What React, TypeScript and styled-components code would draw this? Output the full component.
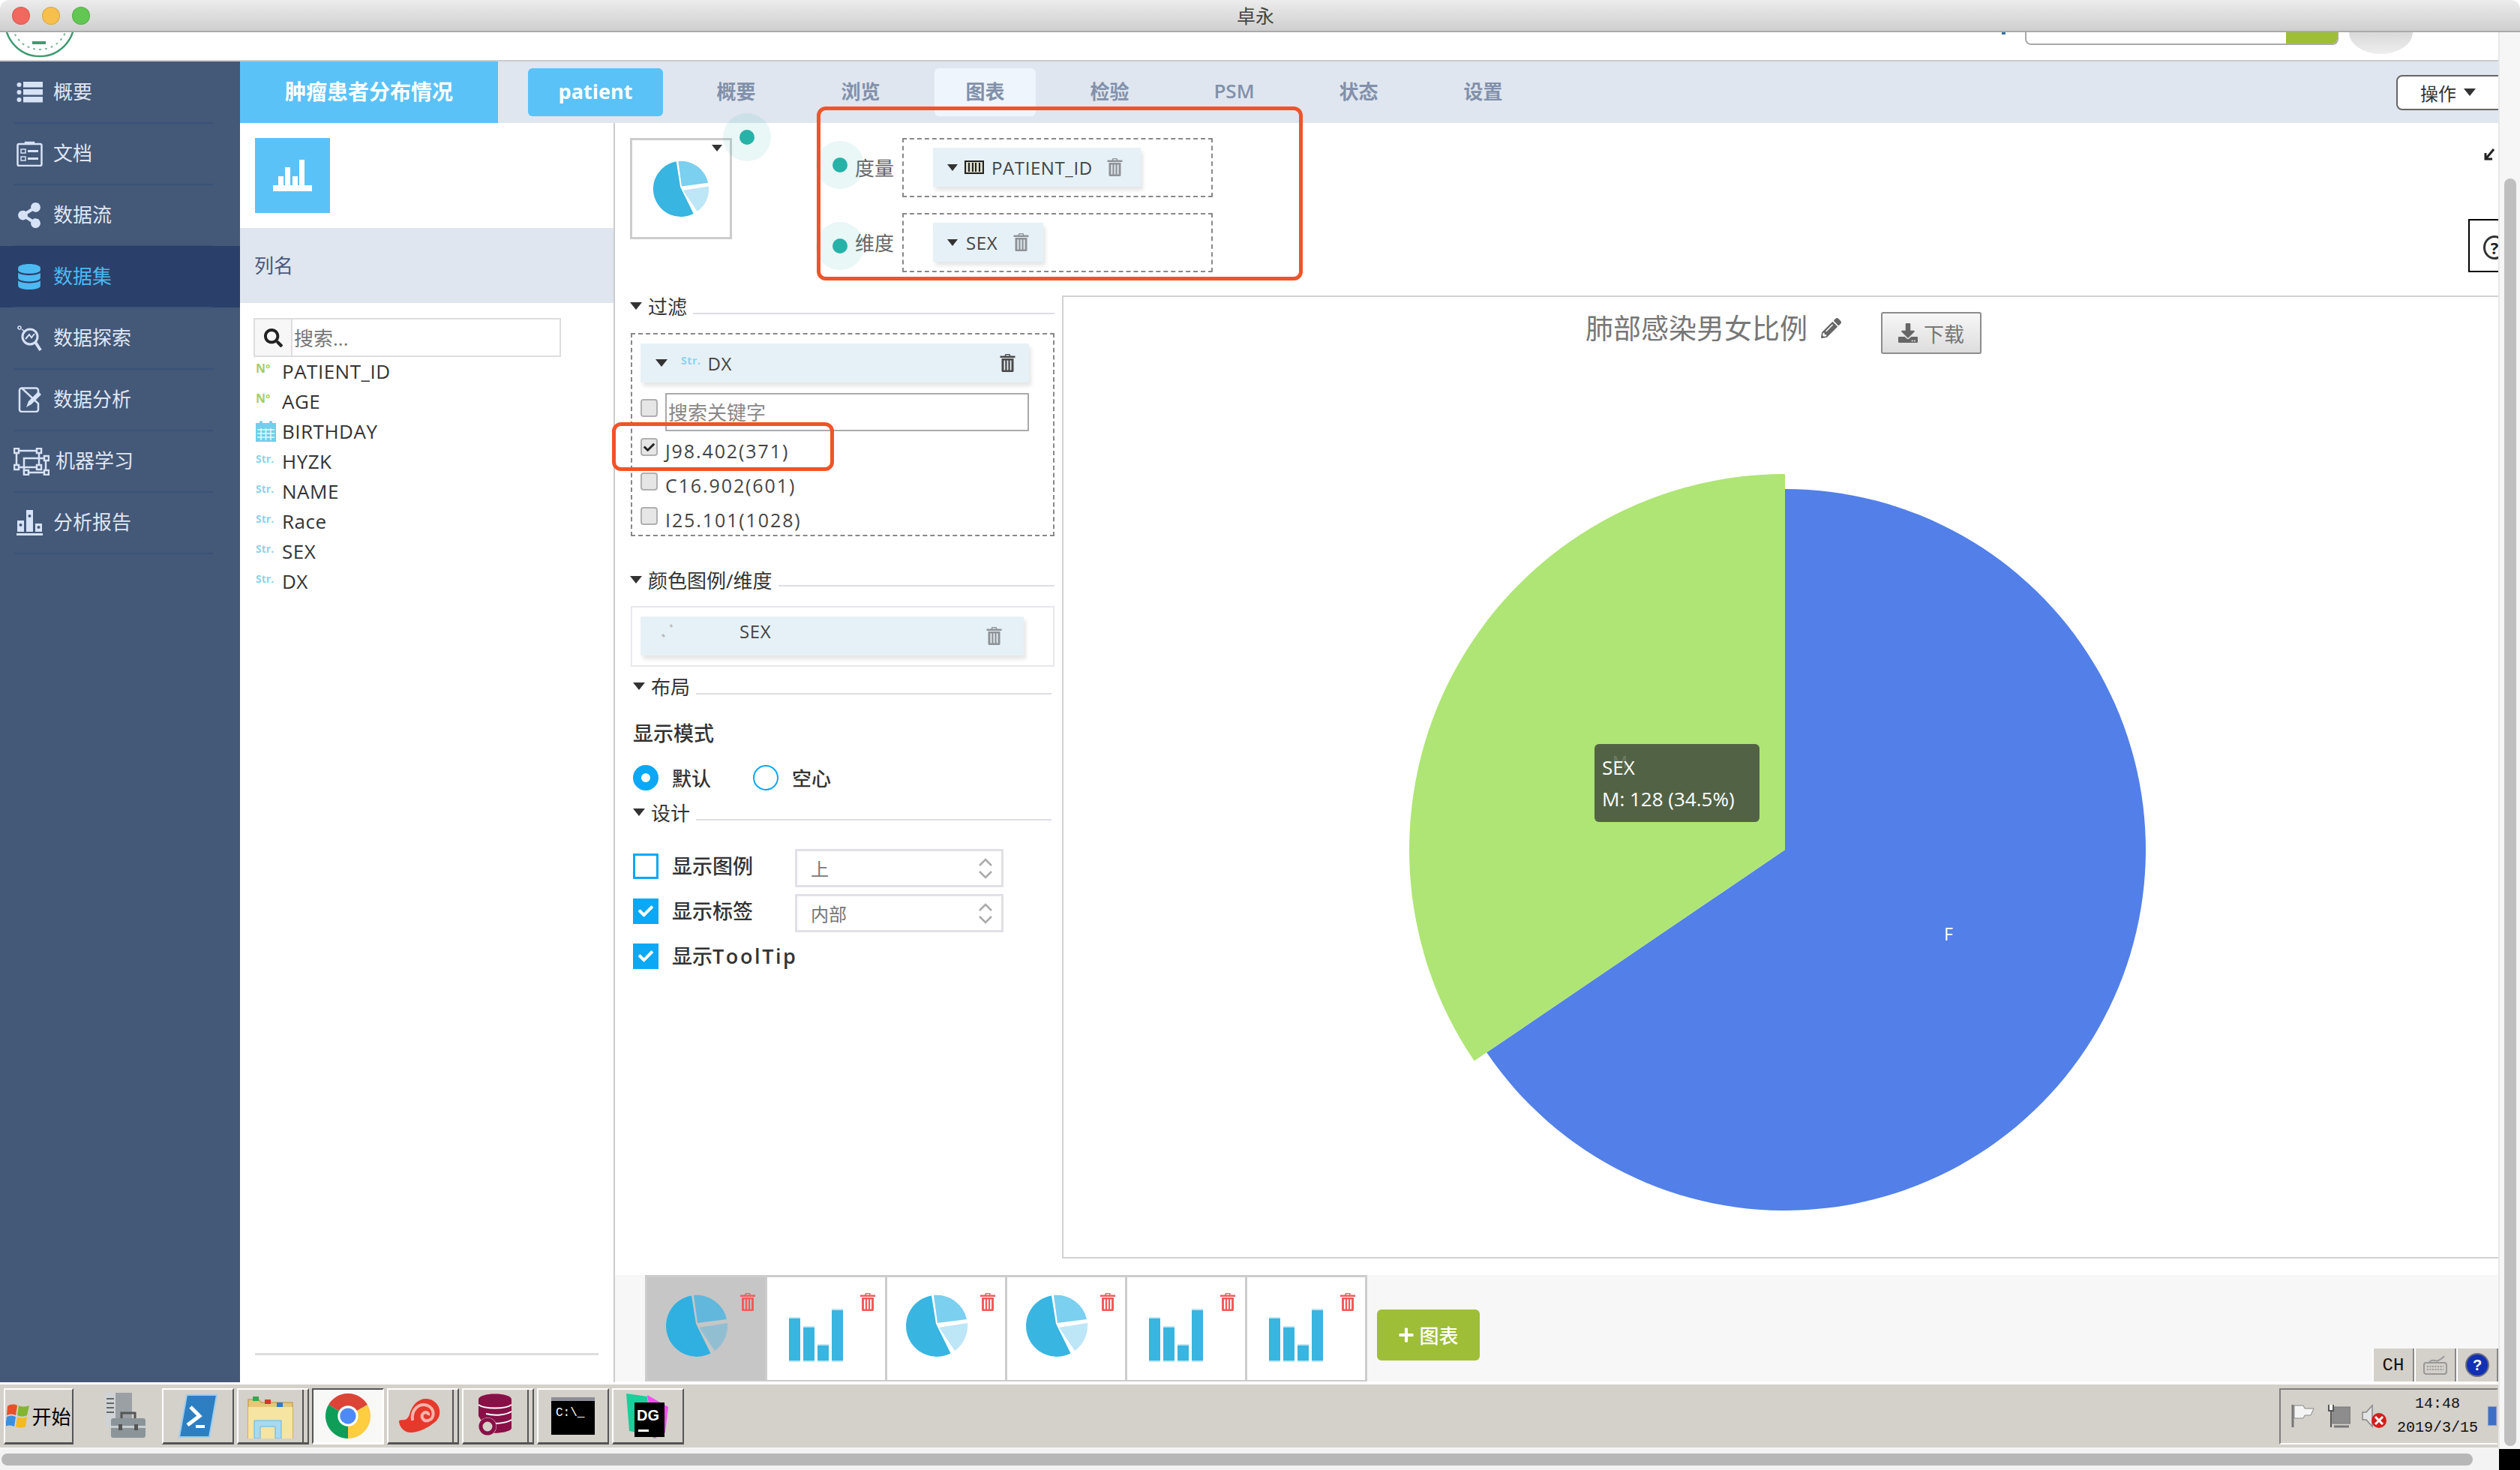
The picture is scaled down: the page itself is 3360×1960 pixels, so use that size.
import React from "react";
import styled, { createGlobalStyle } from "styled-components";
import { FaShareAlt, FaDatabase, FaSearch, FaPencilAlt, FaDownload, FaCheck, FaPlus } from "react-icons/fa";

const Global = createGlobalStyle`
  html, body { margin: 0; padding: 0; background: #fff; }
  body { font-family: "Open Sans", "Noto Sans CJK SC", sans-serif; color: #333; }
  * { box-sizing: border-box; }
`;

const Root = styled.div`
  position: relative; width: 3360px; height: 1960px; overflow: hidden;
  display: flex; flex-direction: column; background: #fff;
`;
const TitleBar = styled.div`
  height: 43px; flex: none; display: flex; align-items: center; position: relative;
  background: linear-gradient(#ececec, #cfcfcf); border-bottom: 2px solid #aaa;
  border-radius: 12px 12px 0 0; padding-left: 16px; gap: 16px;
`;
const Light = styled.span<{ $c: string }>`
  width: 24px; height: 24px; border-radius: 50%; background: ${p => p.$c};
  border: 1px solid rgba(0,0,0,.12); flex: none;
`;
const WindowTitle = styled.div`
  margin-left: 1508px; width: 60px; text-align: center; font-size: 25px; line-height: 30px; color: #444;
`;
const Upper = styled.div`height: 1889px; flex: none; display: flex;`;
const Page = styled.div`width: 3331px; flex: none; display: flex; flex-direction: column; background: #f5f5f5;`;
const VScroll = styled.div`
  width: 29px; flex: none; background: #f6f6f6; border-left: 2px solid #e8e8e8;
  padding: 195px 5px 4px 6px;
`;
const VThumb = styled.div`height: 100%; width: 16px; border-radius: 8px; background: #bfbfbf;`;
const HBar = styled.div`height: 28px; flex: none; display: flex;`;
const HTrack = styled.div`width: 3332px; flex: none; background: #f3f3f3; padding: 6px 35px 6px 2px;`;
const HThumb = styled.div`height: 16px; border-radius: 8px; background: #b7b7b7;`;
const Corner = styled.div`flex: 1; background: #000;`;

const Header = styled.header`
  height: 39px; flex: none; display: flex; align-items: flex-start; background: #fff;
  border-bottom: 2px solid #ccc; overflow: hidden;
`;
const Logo = styled.svg`width: 96px; height: 35px; margin-left: 5px; flex: none;`;
const TinyMark = styled.span`width: 5px; height: 3px; margin-left: 2568px; background: #3a6ea5; flex: none;`;
const TopSearch = styled.div`
  width: 418px; height: 17px; margin-left: 26px; display: flex; justify-content: flex-end; flex: none;
  border: 2px solid #aaa; border-top: none; border-radius: 0 0 8px 8px; overflow: hidden; background: #fff;
`;
const TopSearchBtn = styled.div`width: 68px; height: 100%; background: #9ebe38;`;
const Avatar = styled.div`
  width: 85px; height: 29px; margin-left: 14px; flex: none;
  border-radius: 0 0 43px 43px / 0 0 29px 29px; background: linear-gradient(#d9d9d9, #eeeeee);
`;

const Main = styled.div`height: 1761px; flex: none; display: flex; background: #fff;`;
const Sidebar = styled.nav`width: 320px; flex: none; background: #445878; display: flex; flex-direction: column;`;
const SideItem = styled.div<{ $active?: boolean }>`
  height: 82px; flex: none; position: relative; display: flex; align-items: center;
  background: ${p => (p.$active ? "#2a3f69" : "transparent")};
  color: ${p => (p.$active ? "#4cb9f1" : "#dfe6f2")};
  font-size: 26px;
  &::after {
    content: ""; position: absolute; left: 18px; width: 266px; bottom: -1px; height: 2px;
    background: #3a5278;
  }
`;
const SideIcon = styled.span<{ $wide?: boolean }>`
  width: ${p => (p.$wide ? 74 : 71)}px; flex: none; display: flex; justify-content: flex-start;
  padding-left: ${p => (p.$wide ? 18 : 22)}px;
`;
const SideLabel = styled.span`line-height: 36px; margin-top: -2px;`;

const Content = styled.div`flex: 1; min-width: 0; display: flex; flex-direction: column; overflow: hidden;`;
const TopBand = styled.div`height: 82px; flex: none; display: flex; align-items: center; background: #dfe6ef;`;
const ProjectTitle = styled.div`
  width: 344px; height: 82px; flex: none; background: #5bc2f7; color: #fff; padding-bottom: 4px;
  font-size: 28px; font-weight: 700; display: flex; align-items: center; justify-content: center;
`;
const DatasetTab = styled.div`
  width: 180px; height: 64px; margin-left: 40px; margin-right: 30px; flex: none; border-radius: 6px;
  background: #5bc2f7; color: #fff; font-size: 27px; font-weight: 700; padding-bottom: 4px;
  display: flex; align-items: center; justify-content: center;
`;
const TabRow = styled.div`display: flex; gap: 31px; flex: none;`;
const Tab = styled.div<{ $active?: boolean }>`
  width: 135px; height: 64px; border-radius: 6px; font-size: 26px; color: #8290aa; font-weight: 600;
  display: flex; align-items: center; justify-content: center; padding-bottom: 4px;
  background: ${p => (p.$active ? "#eef5fc" : "transparent")};
`;
const ActionBtn = styled.div`
  margin-left: auto; margin-right: -14px; width: 150px; height: 47px; flex: none;
  background: #fff; border: 2px solid #666; border-radius: 8px; font-size: 24px; color: #333;
  display: flex; align-items: center; gap: 10px; padding-left: 30px;
`;
const Caret = styled.span<{ $w?: number; $c?: string }>`
  display: inline-block; flex: none; width: 0; height: 0;
  border-left: ${p => (p.$w ?? 16) / 2}px solid transparent;
  border-right: ${p => (p.$w ?? 16) / 2}px solid transparent;
  border-top: ${p => Math.round((p.$w ?? 16) * 0.6)}px solid ${p => p.$c ?? "#333"};
`;

const Row = styled.div`flex: 1; display: flex; min-height: 0;`;
const ColumnList = styled.div`width: 500px; flex: none; border-right: 2px solid #ccc; display: flex; flex-direction: column;`;
const TypeBtn = styled.div`
  width: 100px; height: 100px; margin: 20px 0 20px 20px; flex: none; background: #5bc2f7;
  display: flex; align-items: center; justify-content: center;
`;
const ColHead = styled.div`
  height: 100px; flex: none; background: #dfe6ef; color: #4a5a80; font-size: 26px;
  display: flex; align-items: center; padding: 0 0 3px 19px;
`;
const SearchBox = styled.div`
  width: 410px; height: 52px; margin: 20px 0 0 18px; flex: none; display: flex;
  border: 2px solid #ddd; font-size: 26px; color: #777; align-items: stretch;
`;
const SearchIcon = styled.span`
  width: 50px; flex: none; background: #f7f7f7; border-right: 2px solid #ddd; color: #222;
  display: flex; align-items: center; justify-content: center;
`;
const SearchHint = styled.span`padding-left: 2px; align-self: center;`;
const Fields = styled.div`margin-top: -1px; padding-left: 21px; display: flex; flex-direction: column;`;
const FieldRow = styled.div`height: 40px; display: flex; align-items: center; font-size: 26px; color: #333; letter-spacing: .5px;`;
const TypeSlot = styled.span`width: 35px; flex: none; display: flex; align-items: center;`;
const StrTag = styled.span`font-size: 14px; color: #8ed3ee; font-weight: 700; letter-spacing: 0; margin-top: -8px;`;
const NoTag = styled.span`font-size: 16px; color: #a3cf62; font-weight: 700; letter-spacing: 0; margin-top: -8px;`;
const SideRule = styled.div`height: 3px; margin: auto 20px 36px 20px; background: #ddd; flex: none;`;

const Workspace = styled.div`flex: 1; min-width: 0; display: flex; flex-direction: column; position: relative;`;
const Shelf = styled.div`height: 230px; flex: none; display: flex; padding: 20px 0 0 20px;`;
const Picker = styled.div`
  position: relative; width: 136px; height: 135px; flex: none; border: 3px solid #ccc;
  display: flex; align-items: center; justify-content: center;
`;
const PickerCaret = styled.span`position: absolute; top: 6px; right: 10px; display: flex;`;
const ShelfRows = styled.div`margin-left: 164px; display: flex; flex-direction: column; gap: 21px;`;
const ShelfRow = styled.div`display: flex; align-items: center; height: 79px;`;
const ShelfLabel = styled.span`width: 63px; font-size: 26px; color: #666; flex: none; margin-top: -2px;`;
const DropBox = styled.div`
  width: 414px; height: 79px; flex: none; border: 2px dashed #888; padding: 11px 0 0 39px;
`;
const Chip = styled.div<{ $w: number; $color?: string }>`
  width: ${p => p.$w}px; height: 52px; background: #e6f1f7; box-shadow: 3px 5px 5px rgba(0,0,0,.1);
  display: flex; align-items: center; font-size: 24px; letter-spacing: .6px; color: ${p => p.$color ?? "#444"};
  position: relative;
`;
const ChipCaret = styled.span<{ $mr?: number }>`margin-left: 19px; margin-right: ${p => p.$mr ?? 9}px; display: flex;`;
const IdIcon = styled.svg`width: 26px; height: 18px; margin-right: 10px; flex: none;`;
const ChipTrash = styled.span<{ $ml?: number; $end?: number }>`
  margin-left: ${p => (p.$end !== undefined ? "auto" : `${p.$ml ?? 20}px`)};
  margin-right: ${p => p.$end ?? 0}px; display: flex; flex: none;
`;

const Split = styled.div`height: 1306px; flex: none; display: flex;`;
const Controls = styled.div`width: 596px; flex: none; padding: 0 10px 0 21px; display: flex; flex-direction: column;`;
const SectionHead = styled.div<{ $mt?: number; $inset?: boolean }>`
  height: 28px; flex: none; display: flex; align-items: center; gap: 8px; font-size: 26px; color: #333;
  margin-top: ${p => p.$mt ?? 0}px; position: relative;
  margin-left: ${p => (p.$inset ? 3 : -1)}px; margin-right: ${p => (p.$inset ? 4 : 0)}px;
`;
const HeadLine = styled.span<{ $b?: number }>`
  flex: 1; height: 2px; background: #dedee6; align-self: flex-end; margin-bottom: ${p => p.$b ?? 3}px;
`;
const FilterBox = styled.div`
  height: 271px; margin-top: 22px; flex: none; border: 2px dashed #888; padding: 12px 32px 0 11px;
  display: flex; flex-direction: column;
`;
const DxCaret = styled.span`margin-left: 20px; margin-right: 18px; display: flex;`;
const DxTag = styled.span`font-size: 14px; color: #8ed3ee; font-weight: 700; margin-right: 9px; margin-top: -8px;`;
const SearchRow = styled.div`display: flex; margin-top: 14px; height: 51px; gap: 10px; align-items: flex-start;`;
const MiniCheck = styled.span`
  width: 23px; height: 24px; flex: none; border-radius: 4px; border: 2px solid #b0b0b0; background: #e6e6e6;
  display: flex; align-items: center; justify-content: center; color: #222;
`;
const MiniCheckWrap = styled.span`margin-top: 8px; display: flex;`;
const KeywordInput = styled.div`
  flex: 1; height: 51px; border: 2px solid #aaa; font-size: 26px; color: #888; padding: 6px 0 0 2px; line-height: 36px;
`;
const Options = styled.div`margin-top: 6px; display: flex; flex-direction: column; gap: 6px;`;
const OptionRow = styled.div`
  height: 40px; display: flex; gap: 10px; align-items: center; font-size: 25px; color: #444; letter-spacing: 1.9px;
  & > span { margin-bottom: 10px; }
`;
const LegendBox = styled.div`
  height: 81px; margin-top: 21px; flex: none; border: 2px solid #e8e8ee; padding: 12px 0 0 11px;
`;
const LegendGrip = styled.svg`width: 18px; height: 18px; margin-left: 26px; margin-top: -14px; flex: none;`;
const LegendName = styled.span`margin-left: 88px; margin-top: -14px; font-size: 24px; color: #444;`;
const FieldLabel = styled.div`margin-top: 29px; margin-left: 3px; height: 40px; flex: none; font-size: 27px; line-height: 40px; color: #333; font-weight: 500;`;
const RadioRow = styled.div`margin-top: 22px; margin-left: 3px; height: 34px; display: flex; align-items: center; flex: none; font-size: 26px; color: #333; font-weight: 500;`;
const Radio = styled.span<{ $on?: boolean }>`
  width: 34px; height: 34px; border-radius: 50%; flex: none;
  ${p => (p.$on ? "border: 11px solid #0aa8f5; background: #fff;" : "border: 2px solid #0aa8f5;")}
`;
const RadioText = styled.span`margin-left: 18px; width: 108px;`;
const DesignRows = styled.div`margin-top: 35px; margin-left: 3px; display: flex; flex-direction: column; gap: 9px;`;
const DesignRow = styled.div`height: 51px; display: flex; align-items: flex-start;`;
const Tick = styled.span<{ $on?: boolean }>`
  width: 34px; height: 34px; margin-top: 6px; flex: none; border: 3px solid #0aa8f5; color: #fff;
  background: ${p => (p.$on ? "#0aa8f5" : "#fff")}; display: flex; align-items: center; justify-content: center;
`;
const TickLabel = styled.span`margin-left: 18px; margin-top: 6px; line-height: 34px; font-size: 27px; width: 164px; color: #333; font-weight: 500; flex: none; white-space: nowrap;`;
const TickLatin = styled.span`letter-spacing: 2.6px; font-weight: 600;`;
const SelectBox = styled.div`
  width: 278px; height: 51px; flex: none; border: 3px solid #e0e0e6; display: flex; align-items: center;
  padding: 0 10px 0 18px; justify-content: space-between; font-size: 24px; color: #777;
`;
const Chev = styled.svg`width: 22px; height: 30px; flex: none;`;

const Chart = styled.div`
  flex: 1; min-width: 0; height: 1284px; border: 2px solid #d2d2d2; border-right: none; background: #fff;
  display: flex; flex-direction: column;
`;
const ChartHead = styled.div`display: flex; align-items: flex-start; padding: 20px 0 0 696px; height: 76px; flex: none;`;
const ChartTitle = styled.span`font-size: 37px; line-height: 44px; color: #777; flex: none;`;
const PencilSlot = styled.span`margin: 8px 0 0 18px; color: #666; display: flex; flex: none;`;
const DownloadBtn = styled.div`
  margin-left: 53px; width: 134px; height: 56px; flex: none; border: 2px solid #8c8c8c; border-radius: 3px;
  background: linear-gradient(#f7f7f7, #dddddd); display: flex; align-items: center; justify-content: center;
  gap: 8px; font-size: 27px; color: #777;
`;
const Canvas = styled.div`position: relative; width: 1000px; height: 1000px; margin: 153px 0 0 452px; flex: none;`;
const PieSvg = styled.svg`width: 1000px; height: 1000px; display: block;`;
const Tooltip = styled.div`
  position: absolute; left: 256px; top: 367px; width: 220px; height: 104px; border-radius: 6px;
  background: #526345; color: #fff; font-size: 26px; line-height: 42px; padding: 10px 0 0 10px;
`;
const GhostM = styled.span`position: absolute; left: 24px; top: 2px; font-size: 22px; color: rgba(255,255,255,.18);`;

const Strip = styled.div`
  height: 142px; flex: none; background: #f7f7f7; padding-left: 40px; display: flex; position: relative;
`;
const Thumb = styled.div<{ $sel?: boolean; $last?: boolean }>`
  width: ${p => (p.$last ? 163 : 160)}px; height: 142px; flex: none; position: relative;
  background: ${p => (p.$sel ? "#c6c6c6" : "#fff")};
  border: 3px solid #ccc; border-right-width: ${p => (p.$last ? 3 : 0)}px;
  border-bottom-width: 2px; padding-top: 23px;
`;
const ThumbTrash = styled.span`position: absolute; left: 123px; top: 21px; display: flex;`;
const ThumbPie = styled.svg`width: 84px; height: 84px; margin-left: 24px; display: block;`;
const ThumbBars = styled.svg`width: 72px; height: 72px; margin: 19px 0 0 29px; display: block;`;
const AddChart = styled.div`
  width: 137px; height: 68px; margin: 46px 0 0 13px; flex: none; border-radius: 6px; background: #9ebe38; color: #fff;
  display: flex; align-items: center; justify-content: center; gap: 6px; font-size: 26px; font-weight: 500;
`;
const LangBar = styled.div`position: absolute; right: 0; bottom: 0; height: 44px; display: flex; background: #d4d0ca;`;
const LangCell = styled.div`
  width: 56px; height: 44px; border-left: 2px solid #fff; border-right: 2px solid #888;
  display: flex; align-items: center; justify-content: center;
  font-family: "Liberation Mono", monospace; font-size: 24px; color: #111;
`;

const FrameGap = styled.div`height: 3px; flex: none; background: #fff;`;
const Taskbar = styled.div`
  height: 84px; flex: none; background: #d4d0ca; display: flex; align-items: center; padding-left: 5px; gap: 4px;
  overflow: hidden;
`;
const TaskBtn = styled.div<{ $w?: number; $stack?: boolean; $down?: boolean }>`
  width: ${p => p.$w ?? 96}px; height: 75px; flex: none; display: flex; align-items: center; justify-content: center;
  border: 2px solid; border-color: ${p => (p.$down ? "#555 #fff #fff #555" : "#fff #555 #555 #fff")};
  border-bottom-width: 3px;
  background: ${p => (p.$down ? "#f8f8f6" : "#d4d0ca")};
  ${p => (p.$stack ? "box-shadow: inset -5px 0 0 #d4d0ca, inset -7px 0 0 #555; padding-right: 8px;" : "")}
`;
const StartLabel = styled.span`font-size: 26px; color: #000; margin-left: 2px;`;
const PlainIcon = styled.div`width: 110px; height: 75px; flex: none; display: flex; align-items: center; justify-content: center; padding-left: 20px;`;
const Tray = styled.div`
  margin-left: auto; width: 292px; height: 75px; flex: none; display: flex; align-items: center;
  border: 2px solid; border-color: #808080 #d4d0ca #fff #808080; padding-left: 14px; position: relative;
`;
const TrayIcons = styled.div`display: flex; gap: 15px; align-items: center;`;
const Clock = styled.div`
  margin-left: 8px; width: 118px; text-align: center; font-family: "Liberation Mono", monospace; font-size: 20px; line-height: 32px; color: #111;
`;
const TrayBlue = styled.span`width: 12px; height: 26px; margin-left: 8px; background: #3f6fc4; border: 1px solid #8a9cc0; flex: none;`;

const Overlay = styled.div<{ $x: number; $y: number; $w: number; $h: number }>`
  position: absolute; left: ${p => p.$x}px; top: ${p => p.$y}px; width: ${p => p.$w}px; height: ${p => p.$h}px;
  border: 5px solid #f05427; border-radius: 12px; pointer-events: none;
`;
const Halo = styled.div<{ $x: number; $y: number }>`
  position: absolute; left: ${p => p.$x - 32}px; top: ${p => p.$y - 32}px; width: 64px; height: 64px; border-radius: 50%;
  background: rgba(39,178,168,.1); display: flex; align-items: center; justify-content: center;
`;
const Dot = styled.span`width: 20px; height: 20px; border-radius: 50%; background: #27b2a8;`;
const ExpandMark = styled.svg`position: absolute; left: 3312px; top: 198px; width: 14px; height: 16px;`;
const HelpBox = styled.div`
  position: absolute; left: 3291px; top: 292px; width: 40px; height: 71px; border: 2px solid #000; border-right: none;
  overflow: hidden; padding: 20px 0 0 18px;
`;
const HelpRing = styled.span`
  display: block; width: 30px; height: 32px; border: 3px solid #333; border-radius: 50%; font-size: 22px; font-weight: 700;
  line-height: 26px; text-align: center; color: #222;
`;

const Trash = ({ c = "#8f9397", w = 23, h = 24 }: { c?: string; w?: number; h?: number }) => (
  <svg width={w} height={h} viewBox="0 0 22 24" aria-hidden="true">
    <path fill={c} fillRule="evenodd" d="M8 0h6l1 2.5h6v2.5H1V2.5h6zM9 1.2 8.6 2.5h4.8L13 1.2zM3 6h16v16.5a1.5 1.5 0 0 1-1.5 1.5h-13A1.5 1.5 0 0 1 3 22.500zM6 8.500v13h1.800v-13zM10.100 8.500v13h1.800v-13zM14.200 8.500v13H16v-13z" />
  </svg>
);
const ListIcon = () => (
  <svg width="35" height="28" viewBox="0 0 35 28" fill="#d6e2f6">
    <circle cx="3.500" cy="4" r="3" /><circle cx="3.500" cy="14" r="3" /><circle cx="3.500" cy="24" r="3" />
    <rect x="9" y="0" width="26" height="7.500" /><rect x="9" y="10" width="26" height="7.500" /><rect x="9" y="20" width="26" height="7.500" />
  </svg>
);
const DocIcon = () => (
  <svg width="35" height="34" viewBox="0 0 35 34" fill="none" stroke="#d6e2f6" strokeWidth="2.500">
    <rect x="1.500" y="4" width="32" height="29" rx="2" />
    <path d="M12 4V2h11v2" /><rect x="6" y="11" width="6" height="5" strokeWidth="1.500" /><rect x="6" y="21" width="6" height="5" strokeWidth="1.500" />
    <path d="M15 13.500h14M15 23.500h14" strokeWidth="3" />
  </svg>
);
const ExploreIcon = () => (
  <svg width="36" height="34" viewBox="0 0 36 34" fill="none" stroke="#d6e2f6" strokeWidth="3">
    <circle cx="18" cy="15" r="10" /><path d="M25 22l7 11" strokeWidth="4" /><path d="M12 18l5-6 3 4 4-5" strokeWidth="2" />
    <circle cx="4" cy="3" r="2" strokeWidth="1.500" /><path d="M7 5l4 3" strokeWidth="1.500" />
  </svg>
);
const NoteIcon = () => (
  <svg width="34" height="34" viewBox="0 0 34 34" fill="none" stroke="#d6e2f6" strokeWidth="2.500">
    <path d="M7 1.500h19a3 3 0 0 1 3 3V10M29 22v8a3 3 0 0 1-3 3H7a3 3 0 0 1-3-3V4.500a3 3 0 0 1 3-3z" />
    <path d="M13 27l3-8 13-13 4 4-13 13z" fill="#d6e2f6" stroke="none" />
  </svg>
);
const MlIcon = () => (
  <svg width="48" height="37" viewBox="0 0 48 37" fill="#445878" stroke="#d6e2f6" strokeWidth="2.500">
    <rect x="4" y="4" width="30" height="22" fill="none" /><rect x="14" y="14" width="29" height="19" fill="none" />
    <rect x="1" y="1" width="6" height="6" /><rect x="31" y="1" width="6" height="6" /><rect x="1" y="23" width="6" height="6" /><rect x="31" y="23" width="6" height="6" />
    <rect x="41" y="11" width="6" height="6" /><rect x="14" y="30" width="6" height="6" /><rect x="41" y="30" width="6" height="6" />
  </svg>
);
const ReportIcon = () => (
  <svg width="35" height="34" viewBox="0 0 35 34" fill="#d6e2f6">
    <rect x="1" y="14" width="9" height="15" /><rect x="13" y="0" width="9" height="29" /><rect x="25" y="18" width="9" height="11" />
    <rect x="0" y="31" width="35" height="3" /><circle cx="5.500" cy="20" r="2" fill="#445878" /><circle cx="17.500" cy="8" r="2" fill="#445878" /><circle cx="29.500" cy="23" r="2" fill="#445878" />
  </svg>
);
const Calendar = () => (
  <svg width="27" height="28" viewBox="0 0 27 28">
    <rect x="0" y="3" width="27" height="25" fill="#6fd0ec" /><rect x="5" y="0" width="4" height="7" rx="2" fill="#6fd0ec" /><rect x="18" y="0" width="4" height="7" rx="2" fill="#6fd0ec" />
    <path d="M2 12h23M2 17h23M2 22h23M7 10v16M13.500 10v16M20 10v16" stroke="#e8f8fd" strokeWidth="1.500" />
  </svg>
);
const PiePaths = ({ a = "#38b5e0", b = "#7bcfef", c = "#bde6f6" }: { a?: string; b?: string; c?: string }) => (
  <>
    <path fill={a} d="M-1 -3L-7 -40.500A41 41 0 1 0 18.500 36.500Z" />
    <path fill={b} d="M1 -4L-4 -41A41 41 0 0 1 40 -9Z" />
    <path fill={c} d="M3 2L41 -4A41 41 0 0 1 24 33Z" />
  </>
);
const Bars = () => (
  <>
    {[[0, 11], [19, 23], [38, 47], [57, 0]].map(([x, y]) => (
      <g key={x}>
        <rect x={x} y={y} width="15" height={71 - y} fill="#38b5e0" />
        <rect x={x} y={y} width="15" height="2" fill="#bde6f5" />
        <rect x={x} y="69" width="15" height="2" fill="#bde6f5" />
      </g>
    ))}
  </>
);
const UpDown = () => (
  <Chev viewBox="0 0 22 30" fill="none" stroke="#aaa" strokeWidth="2.500">
    <path d="M3 11l8-8 8 8M3 19l8 8 8-8" />
  </Chev>
);

const WinFlag = () => (
  <svg width="32" height="38" viewBox="0 0 32 38">
    <path fill="#e8502a" d="M2 6c4-3 9-3 13-1l-2 13c-4-2-8-2-12 0z" /><path fill="#82b532" d="M17 5c4 2 9 2 14 0l-3 13c-4 2-9 2-13 0z" />
    <path fill="#3a8fe0" d="M1 20c4-2 8-2 12 0l-2 13c-4-2-8-2-12 0z" /><path fill="#f5b921" d="M15 20c4 2 9 2 13 0l-2 13c-4 2-9 2-13 0z" />
  </svg>
);
const ToolIcon = () => (
  <svg width="58" height="62" viewBox="0 0 58 62">
    <rect x="2" y="0" width="36" height="46" fill="#9aa0a4" /><rect x="2" y="0" width="14" height="46" fill="#cfd3d5" />
    <path d="M4 8h10M4 14h10M4 20h10M4 26h10" stroke="#666" strokeWidth="2" />
    <rect x="10" y="34" width="46" height="26" rx="3" fill="#8b9499" /><path d="M24 34v-7h18v7" fill="none" stroke="#555" strokeWidth="3" /><rect x="10" y="44" width="46" height="3" fill="#c8cdd0" />
    <rect x="20" y="42" width="5" height="8" fill="#555" /><rect x="41" y="42" width="5" height="8" fill="#555" />
  </svg>
);
const PsIcon = () => (
  <svg width="54" height="60" viewBox="0 0 54 60">
    <path fill="#2d7fc1" d="M12 2h40l-10 56H2z" /><path fill="none" stroke="#9ccdf0" strokeWidth="2" d="M12 2h40l-10 56H2z" />
    <path d="M17 18l12 12-16 12" fill="none" stroke="#fff" strokeWidth="5" /><path d="M24 44h12" stroke="#fff" strokeWidth="4" />
  </svg>
);
const FolderIcon = () => (
  <svg width="62" height="60" viewBox="0 0 62 60">
    <path fill="#e6c877" d="M2 8h14l3 4h42v48H2z" stroke="#c9a24e" strokeWidth="1.500" />
    <rect x="8" y="4" width="8" height="6" fill="#34a853" /><rect x="24" y="8" width="8" height="6" fill="#d0392b" /><rect x="40" y="12" width="8" height="6" fill="#2a7ad8" />
    <rect x="2" y="18" width="59" height="42" fill="#f6e4a2" />
    <path d="M10 60V36h36v24h-8V44H18v16z" fill="#a7d9f2" stroke="#6bb5dc" />
  </svg>
);
const ChromeIcon = () => (
  <svg width="60" height="60" viewBox="0 0 48 48">
    <path fill="#db4437" d="M24 24L3.200 12A24 24 0 0 1 44.800 12Z" /><path fill="#0f9d58" d="M24 24L3.200 12A24 24 0 0 0 24 48Z" />
    <path fill="#ffcd40" d="M24 24L44.800 12A24 24 0 0 1 24 48Z" /><circle cx="24" cy="24" r="11" fill="#fff" /><circle cx="24" cy="24" r="8.500" fill="#4c8bf5" />
  </svg>
);
const SnailIcon = () => (
  <svg width="60" height="56" viewBox="0 0 60 56">
    <path fill="#e5392b" d="M2 34c6-2 10 2 14-8C20 10 32 2 44 6c14 5 16 22 6 30-8 7-22 14-32 14C8 50 2 42 2 34z" />
    <path fill="none" stroke="#f7b3ab" strokeWidth="4" d="M20 34c-2-14 8-24 20-20 10 4 10 18 1 20-7 2-11-6-6-10 3-2 7 0 6 3" />
  </svg>
);
const DbIcon = () => (
  <svg width="48" height="60" viewBox="0 0 48 60">
    <path fill="#8a0f47" d="M2 8c0-10 44-10 44 0v38c0 6-24 8-30 6L2 30z" /><path fill="none" stroke="#fff" strokeWidth="2" d="M2 15c8 6 36 6 44 0M12 27c12 3 26 2 34-3M24 40c8 0 18-2 22-5" />
    <circle cx="14" cy="44" r="12" fill="#d4d0ca" /><circle cx="14" cy="44" r="9" fill="none" stroke="#8a0f47" strokeWidth="5" />
  </svg>
);
const CmdIcon = () => (
  <svg width="58" height="50" viewBox="0 0 58 50">
    <rect width="58" height="50" fill="#000" /><rect width="58" height="5" fill="#8d8d98" />
    <text x="6" y="25" fontFamily="Liberation Mono" fontSize="16" fill="#fff">C:\_</text>
  </svg>
);
const DgIcon = () => (
  <svg width="62" height="64" viewBox="0 0 62 64">
    <path fill="#19cf9a" d="M2 2l28 4 6 52-30-6z" /><path fill="#f24ff0" d="M30 4l28 16-4 34-14 8z" /><path fill="#7b78ee" d="M20 50l28-4-8 16z" />
    <rect x="13" y="14" width="40" height="46" fill="#000" />
    <text x="16" y="38" fontFamily="Liberation Sans" fontSize="20" fontWeight="700" fill="#fff">DG</text><rect x="18" y="50" width="14" height="3" fill="#fff" />
  </svg>
);
const KeyboardIcon = () => (
  <svg width="32" height="28" viewBox="0 0 32 28" fill="none" stroke="#999" strokeWidth="2">
    <rect x="1" y="11" width="30" height="15" rx="3" /><path d="M5 16h22M5 20h22" strokeDasharray="2 1.500" /><path d="M8 10c4-5 8 0 12-2s6-3 8-6" />
  </svg>
);
const HelpIcon = () => (
  <svg width="32" height="32" viewBox="0 0 32 32">
    <circle cx="16" cy="16" r="15" fill="#1230b4" stroke="#6a6f80" strokeWidth="2" />
    <text x="16" y="23" textAnchor="middle" fontFamily="Liberation Sans" fontSize="20" fontWeight="700" fill="#fff">?</text>
  </svg>
);
const TrayFlag = () => (
  <svg width="32" height="32" viewBox="0 0 32 32"><path d="M2 1v30" stroke="#777" strokeWidth="3" /><path d="M4 2h12l2 4h12l-4 9H18l-2 4H4z" fill="#f4f4f4" stroke="#888" /></svg>
);
const TrayNet = () => (
  <svg width="32" height="32" viewBox="0 0 32 32">
    <rect x="8" y="4" width="24" height="22" fill="#8d8d8d" stroke="#777" /><path d="M10 30h20" stroke="#777" strokeWidth="3" /><path d="M3 1v8h6V1M6 9v22" fill="#fff" stroke="#555" strokeWidth="2" />
  </svg>
);
const TraySound = () => (
  <svg width="34" height="32" viewBox="0 0 34 32">
    <path d="M1 11h5l8-9v28l-8-9H1z" fill="#e4e4e4" stroke="#888" strokeWidth="1.500" /><circle cx="23" cy="22" r="10" fill="#d61d1d" /><path d="M18 17l10 10M28 17L18 27" stroke="#fff" strokeWidth="3" />
  </svg>
);

const navItems = [
  { label: "概要", icon: <ListIcon /> },
  { label: "文档", icon: <DocIcon /> },
  { label: "数据流", icon: <FaShareAlt size={34} color="#d6e2f6" /> },
  { label: "数据集", icon: <FaDatabase size={34} color="#4cb9f1" />, active: true },
  { label: "数据探索", icon: <ExploreIcon /> },
  { label: "数据分析", icon: <NoteIcon /> },
  { label: "机器学习", icon: <MlIcon />, ml: true },
  { label: "分析报告", icon: <ReportIcon /> },
];
const fields: [string, "no" | "str" | "cal"][] = [
  ["PATIENT_ID", "no"], ["AGE", "no"], ["BIRTHDAY", "cal"], ["HYZK", "str"],
  ["NAME", "str"], ["Race", "str"], ["SEX", "str"], ["DX", "str"],
];
const tabs = ["概要", "浏览", "图表", "检验", "PSM", "状态", "设置"];
const thumbs = ["pie", "bar", "pie", "pie", "bar", "bar"];

const pt = (r: number, deg: number) => {
  const a = (deg * Math.PI) / 180;
  return `${510 + r * Math.sin(a)} ${508 - r * Math.cos(a)}`;
};

export default function App() {
  return (
    <Root>
      <Global />
      <TitleBar>
        <Light $c="#f1685e" /><Light $c="#f7bf4b" /><Light $c="#62c653" />
        <WindowTitle>卓永</WindowTitle>
      </TitleBar>
      <Upper>
        <Page>
          <Header>
            <Logo viewBox="0 0 96 35">
              <circle cx="48" cy="-14" r="46" fill="#fff" stroke="#3f9a72" strokeWidth="2.500" />
              <circle cx="48" cy="-14" r="37" fill="none" stroke="#7ab99b" strokeWidth="2" strokeDasharray="3 5" />
              <rect x="38" y="12" width="18" height="4" fill="#3f9a72" />
            </Logo>
            <TinyMark />
            <TopSearch><TopSearchBtn /></TopSearch>
            <Avatar />
          </Header>
          <Main>
            <Sidebar>
              {navItems.map(n => (
                <SideItem key={n.label} $active={n.active}>
                  <SideIcon $wide={n.ml}>{n.icon}</SideIcon>
                  <SideLabel>{n.label}</SideLabel>
                </SideItem>
              ))}
            </Sidebar>
            <Content>
              <TopBand>
                <ProjectTitle>肿瘤患者分布情况</ProjectTitle>
                <DatasetTab>patient</DatasetTab>
                <TabRow>
                  {tabs.map(t => <Tab key={t} $active={t === "图表"}>{t}</Tab>)}
                </TabRow>
                <ActionBtn>操作<Caret $w={16} /></ActionBtn>
              </TopBand>
              <Row>
                <ColumnList>
                  <TypeBtn>
                    <svg width="52" height="42" viewBox="0 0 52 42" fill="#fff">
                      <rect x="7" y="22" width="7" height="13" /><rect x="16" y="10" width="7" height="25" /><rect x="26" y="22" width="7" height="13" /><rect x="35" y="0" width="7" height="35" />
                      <rect x="0" y="34" width="52" height="8" />
                    </svg>
                  </TypeBtn>
                  <ColHead>列名</ColHead>
                  <SearchBox>
                    <SearchIcon><FaSearch size={25} /></SearchIcon>
                    <SearchHint>搜索...</SearchHint>
                  </SearchBox>
                  <Fields>
                    {fields.map(([name, kind]) => (
                      <FieldRow key={name}>
                        <TypeSlot>
                          {kind === "no" && <NoTag>Nº</NoTag>}
                          {kind === "str" && <StrTag>Str.</StrTag>}
                          {kind === "cal" && <Calendar />}
                        </TypeSlot>
                        {name}
                      </FieldRow>
                    ))}
                  </Fields>
                  <SideRule />
                </ColumnList>
                <Workspace>
                  <Shelf>
                    <Picker>
                      <PickerCaret><Caret $w={15} /></PickerCaret>
                      <svg width="76" height="76" viewBox="-42 -42 84 84"><PiePaths /></svg>
                    </Picker>
                    <ShelfRows>
                      <ShelfRow>
                        <ShelfLabel>度量</ShelfLabel>
                        <DropBox>
                          <Chip $w={277}>
                            <ChipCaret><Caret $w={15} /></ChipCaret>
                            <IdIcon viewBox="0 0 26 18">
                              <rect x="1" y="1" width="24" height="16" fill="#d8d8c8" stroke="#222" strokeWidth="2" />
                              <path d="M6 3v12M11 3v12M15 3v12M20 3v12" stroke="#222" strokeWidth="2" />
                            </IdIcon>
                            PATIENT_ID
                            <ChipTrash $ml={18}><Trash /></ChipTrash>
                          </Chip>
                        </DropBox>
                      </ShelfRow>
                      <ShelfRow>
                        <ShelfLabel>维度</ShelfLabel>
                        <DropBox>
                          <Chip $w={147}>
                            <ChipCaret $mr={11}><Caret $w={15} /></ChipCaret>
                            SEX
                            <ChipTrash $ml={20}><Trash /></ChipTrash>
                          </Chip>
                        </DropBox>
                      </ShelfRow>
                    </ShelfRows>
                  </Shelf>
                  <Split>
                    <Controls>
                      <SectionHead><Caret /><span>过滤</span><HeadLine /></SectionHead>
                      <FilterBox>
                        <Chip $w={518}>
                          <DxCaret><Caret /></DxCaret>
                          <DxTag>Str.</DxTag>
                          DX
                          <ChipTrash $end={17}><Trash c="#4a4a4a" /></ChipTrash>
                        </Chip>
                        <SearchRow>
                          <MiniCheckWrap><MiniCheck /></MiniCheckWrap>
                          <KeywordInput>搜索关键字</KeywordInput>
                        </SearchRow>
                        <Options>
                          <OptionRow><MiniCheck><FaCheck size={15} /></MiniCheck>J98.402(371)</OptionRow>
                          <OptionRow><MiniCheck />C16.902(601)</OptionRow>
                          <OptionRow><MiniCheck />I25.101(1028)</OptionRow>
                        </Options>
                      </FilterBox>
                      <SectionHead $mt={44}><Caret /><span>颜色图例/维度</span><HeadLine $b={5} /></SectionHead>
                      <LegendBox>
                        <Chip $w={511}>
                          <LegendGrip viewBox="0 0 18 18"><path d="M14 1l2 3M3 14l3 3" stroke="#bbb" strokeWidth="3" /></LegendGrip>
                          <LegendName>SEX</LegendName>
                          <ChipTrash $end={28}><Trash /></ChipTrash>
                        </Chip>
                      </LegendBox>
                      <SectionHead $mt={12} $inset><Caret /><span>布局</span><HeadLine /></SectionHead>
                      <FieldLabel>显示模式</FieldLabel>
                      <RadioRow>
                        <Radio $on /><RadioText>默认</RadioText>
                        <Radio /><RadioText>空心</RadioText>
                      </RadioRow>
                      <SectionHead $mt={15} $inset><Caret /><span>设计</span><HeadLine /></SectionHead>
                      <DesignRows>
                        <DesignRow>
                          <Tick /><TickLabel>显示图例</TickLabel>
                          <SelectBox>上<UpDown /></SelectBox>
                        </DesignRow>
                        <DesignRow>
                          <Tick $on><FaCheck size={20} /></Tick><TickLabel>显示标签</TickLabel>
                          <SelectBox>内部<UpDown /></SelectBox>
                        </DesignRow>
                        <DesignRow>
                          <Tick $on><FaCheck size={20} /></Tick><TickLabel>显示<TickLatin>ToolTip</TickLatin></TickLabel>
                        </DesignRow>
                      </DesignRows>
                    </Controls>
                    <Chart>
                      <ChartHead>
                        <ChartTitle>肺部感染男女比例</ChartTitle>
                        <PencilSlot><FaPencilAlt size={27} /></PencilSlot>
                        <DownloadBtn><FaDownload size={26} color="#666" />下载</DownloadBtn>
                      </ChartHead>
                      <Canvas>
                        <PieSvg viewBox="0 0 1000 1000">
                          <path fill="#5280e8" d={`M510 508L${pt(481, 0)}A481 481 0 1 1 ${pt(481, 235.8)}Z`} />
                          <path fill="#aee574" d={`M510 508L${pt(501, 235.8)}A501 501 0 0 1 ${pt(501, 360)}Z`} />
                          <text x="722" y="629" fontFamily="Open Sans" fontSize="23" fill="#fff">F</text>
                        </PieSvg>
                        <Tooltip>
                          <GhostM>M</GhostM>
                          SEX<br />M: 128 (34.5%)
                        </Tooltip>
                      </Canvas>
                    </Chart>
                  </Split>
                  <Strip>
                    {thumbs.map((t, i) => (
                      <Thumb key={i} $sel={i === 0} $last={i === thumbs.length - 1}>
                        <ThumbTrash><Trash c="#f85a5a" w={22} h={24} /></ThumbTrash>
                        {t === "pie" ? (
                          <ThumbPie viewBox="-42 -42 84 84">
                            {i === 0 ? <PiePaths a="#30b0e0" b="#62b8dc" c="#92bed2" /> : <PiePaths />}
                          </ThumbPie>
                        ) : (
                          <ThumbBars viewBox="0 0 72 72"><Bars /></ThumbBars>
                        )}
                      </Thumb>
                    ))}
                    <AddChart><FaPlus size={22} />图表</AddChart>
                    <LangBar>
                      <LangCell>CH</LangCell>
                      <LangCell><KeyboardIcon /></LangCell>
                      <LangCell><HelpIcon /></LangCell>
                    </LangBar>
                  </Strip>
                </Workspace>
              </Row>
            </Content>
          </Main>
          <FrameGap />
          <Taskbar>
            <TaskBtn $w={93}><WinFlag /><StartLabel>开始</StartLabel></TaskBtn>
            <PlainIcon><ToolIcon /></PlainIcon>
            <TaskBtn><PsIcon /></TaskBtn>
            <TaskBtn $stack><FolderIcon /></TaskBtn>
            <TaskBtn $down><ChromeIcon /></TaskBtn>
            <TaskBtn $stack><SnailIcon /></TaskBtn>
            <TaskBtn $stack><DbIcon /></TaskBtn>
            <TaskBtn><CmdIcon /></TaskBtn>
            <TaskBtn><DgIcon /></TaskBtn>
            <Tray>
              <TrayIcons><TrayFlag /><TrayNet /><TraySound /></TrayIcons>
              <Clock>14:48<br />2019/3/15</Clock>
              <TrayBlue />
            </Tray>
          </Taskbar>
        </Page>
        <VScroll><VThumb /></VScroll>
      </Upper>
      <HBar>
        <HTrack><HThumb /></HTrack>
        <Corner />
      </HBar>
      <Halo $x={996} $y={183}><Dot /></Halo>
      <Halo $x={1120} $y={220}><Dot /></Halo>
      <Halo $x={1120} $y={328}><Dot /></Halo>
      <Overlay $x={1089} $y={142} $w={648} $h={232} />
      <Overlay $x={816} $y={563} $w={296} $h={65} />
      <ExpandMark viewBox="0 0 14 16"><path d="M13 1L3 13M2 6v8h9" fill="none" stroke="#222" strokeWidth="3" /></ExpandMark>
      <HelpBox><HelpRing>?</HelpRing></HelpBox>
    </Root>
  );
}
